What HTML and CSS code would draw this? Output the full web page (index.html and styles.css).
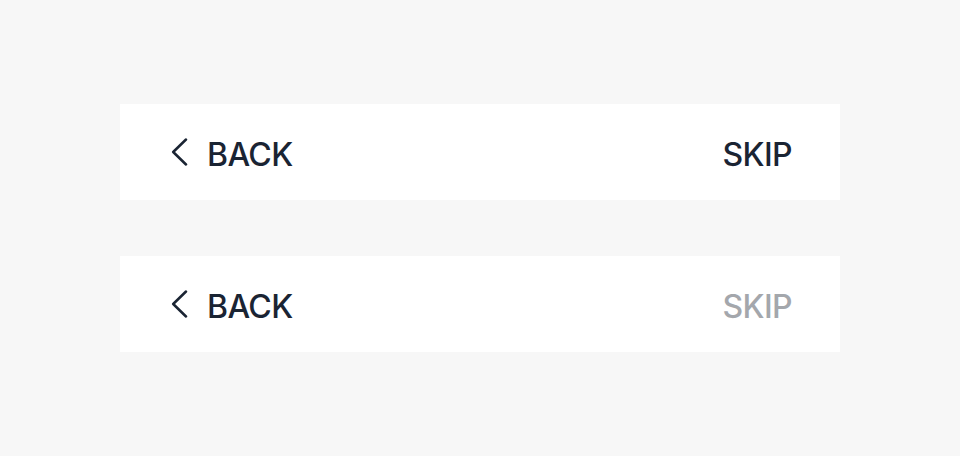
FILE: index.html
```html
<!DOCTYPE html>
<html lang="en">
<head>
  <meta charset="UTF-8" />
  <meta name="viewport" content="width=device-width, initial-scale=1.0" />
  <title>Navigation bars</title>
  <link rel="stylesheet" href="styles.css">
</head>
<body>
  <div class="stack">
    <div class="navbar">
      <button class="nav-back">
        <svg class="chevron" width="18" height="28" viewBox="0 0 18 28"><path d="M16 1.5 L3.2 14 L16 26.5" fill="none" stroke="currentColor" stroke-width="2.5" stroke-linecap="round" stroke-linejoin="round"/></svg>
        <span class="label">BACK</span>
      </button>
      <button class="nav-skip"><span class="label">SKIP</span></button>
    </div>
    <div class="navbar">
      <button class="nav-back">
        <svg class="chevron" width="18" height="28" viewBox="0 0 18 28"><path d="M16 1.5 L3.2 14 L16 26.5" fill="none" stroke="currentColor" stroke-width="2.5" stroke-linecap="round" stroke-linejoin="round"/></svg>
        <span class="label">BACK</span>
      </button>
      <button class="nav-skip disabled"><span class="label">SKIP</span></button>
    </div>
  </div>
</body>
</html>
```

FILE: styles.css
```css
* { box-sizing: border-box; margin: 0; padding: 0; }
body { background: #f7f7f7; font-family: Inter, "Noto Sans", sans-serif; color: #1a2433; }
.stack { display: flex; flex-direction: column; gap: 56px; padding: 104px 120px; }
.navbar { height: 96px; background: #fff; display: flex; align-items: center; justify-content: space-between; padding: 0 48px 0 50px; }
button { border: none; background: none; font: inherit; color: inherit; font-size: 32px; line-height: 40px; cursor: pointer; display: flex; align-items: center; }
.label { display: block; font-weight: 500; letter-spacing: -0.6px; padding-top: 6px; }
.nav-back { gap: 19px; }
.chevron { display: block; }
.nav-skip.disabled { color: #a4a7ac; }
```
